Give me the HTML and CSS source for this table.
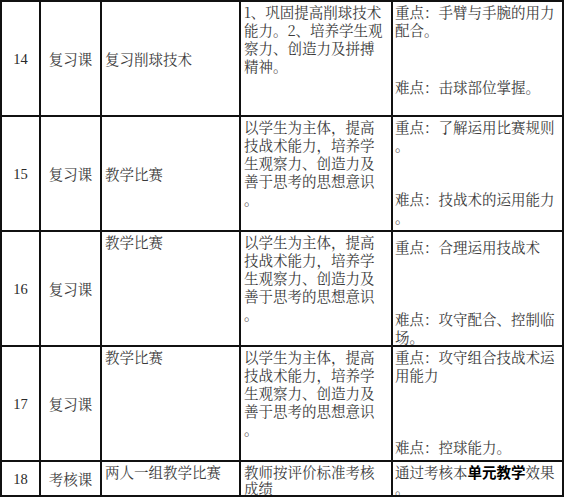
FILE: index.html
```html
<!DOCTYPE html>
<html lang="zh-CN">
<head>
<meta charset="utf-8">
<title>教学计划</title>
<link rel="stylesheet" href="styles.css">
</head>
<body>
<div class="plan">
  <div class="cell num">14</div>
  <div class="cell type">复习课</div>
  <div class="cell topic mid">复习削球技术</div>
  <div class="cell goal">1、巩固提高削球技术<br>能力。2、培养学生观<br>察力、创造力及拼搏<br>精神。</div>
  <div class="cell key">重点：手臂与手腕的用力<br>配合。<br><br><br><span class="low">难点：击球部位掌握。</span></div>

  <div class="cell num">15</div>
  <div class="cell type">复习课</div>
  <div class="cell topic mid">教学比赛</div>
  <div class="cell goal">以学生为主体，提高<br>技战术能力，培养学<br>生观察力、创造力及<br>善于思考的思想意识<br>。</div>
  <div class="cell key">重点：了解运用比赛规则<br>。<br><br><br>难点：技战术的运用能力<br>。</div>

  <div class="cell num">16</div>
  <div class="cell type">复习课</div>
  <div class="cell topic">教学比赛</div>
  <div class="cell goal">以学生为主体，提高<br>技战术能力，培养学<br>生观察力、创造力及<br>善于思考的思想意识<br>。</div>
  <div class="cell key shifted">重点：合理运用技战术<br><br><br><br>难点：攻守配合、控制临<br>场。</div>

  <div class="cell num">17</div>
  <div class="cell type">复习课</div>
  <div class="cell topic">教学比赛</div>
  <div class="cell goal">以学生为主体，提高<br>技战术能力，培养学<br>生观察力、创造力及<br>善于思考的思想意识<br>。</div>
  <div class="cell key">重点：攻守组合技战术运<br>用能力<br><br><br><br>难点：控球能力。</div>

  <div class="cell num last">18</div>
  <div class="cell type last">考核课</div>
  <div class="cell topic last">两人一组教学比赛</div>
  <div class="cell goal last">教师按评价标准考核<br>成绩</div>
  <div class="cell key last">通过考核本<b class="strong">单元教学</b>效果<br>。</div>
</div>
</body>
</html>
```
FILE: styles.css
```css
html, body {
  margin: 0;
  padding: 0;
  background: #ffffff;
}

.plan {
  display: grid;
  grid-template-columns: 37px 59px 137px 150px 169px;
  grid-template-rows: 113px 113px 113px 113px 33px;
  gap: 2px;
  padding: 2px;
  width: max-content;
  background: #111111;
  font-family: "Noto Serif CJK SC", "Liberation Serif", "Noto Sans CJK SC", serif;
  font-size: 14.5px;
  line-height: 18px;
  color: #3a3a3a;
}

.cell {
  background: #ffffff;
  overflow: hidden;
  white-space: nowrap;
}

.num,
.type {
  display: flex;
  align-items: center;
  justify-content: center;
}

.num {
  font-family: "Liberation Serif", serif;
  color: #2a2a2a;
}

.topic {
  padding: 1px 0 0 3px;
}

.topic.mid {
  display: flex;
  align-items: center;
  padding-top: 0;
}

.goal {
  padding: 1px 0 0 3px;
}

.key {
  padding: 1px 0 0 2px;
}

.low {
  display: inline-block;
  margin-top: 3px;
}

.key.shifted {
  padding-top: 6px;
}

.last {
  line-height: 16px;
}

.topic.last,
.goal.last,
.key.last {
  padding-top: 2px;
}

.strong {
  font-family: "Noto Sans CJK SC", sans-serif;
  font-weight: 700;
  color: #000000;
}
```
